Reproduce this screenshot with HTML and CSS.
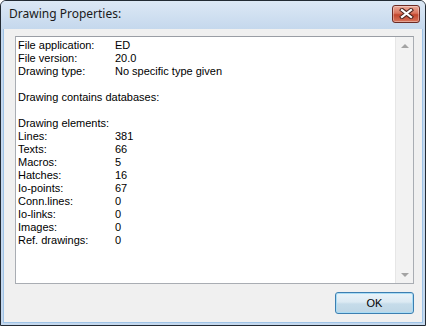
FILE: index.html
```html
<!DOCTYPE html>
<html>
<head>
<meta charset="utf-8">
<link rel="stylesheet" href="styles.css">
</head>
<body>
<div class="window">
  <div class="titlebar">
    <span class="title">Drawing Properties:</span>
    <div class="close" aria-label="Close">
      <svg width="15" height="11" viewBox="0 0 15 11">
        <path d="M3 2 L12 9 M12 2 L3 9" stroke="#4f2620" stroke-width="4.2" stroke-linecap="square"/>
        <path d="M3 2 L12 9 M12 2 L3 9" stroke="#ffffff" stroke-width="2.2" stroke-linecap="square"/>
      </svg>
    </div>
  </div>
  <div class="client">
    <div class="listbox">
      <div class="content">
        <div class="row"><span class="k">File application:</span><span>ED</span></div>
        <div class="row"><span class="k">File version:</span><span>20.0</span></div>
        <div class="row"><span class="k">Drawing type:</span><span>No specific type given</span></div>
        <div class="row blank"></div>
        <div class="row"><span>Drawing contains databases:</span></div>
        <div class="row blank"></div>
        <div class="row"><span>Drawing elements:</span></div>
        <div class="row"><span class="k">Lines:</span><span>381</span></div>
        <div class="row"><span class="k">Texts:</span><span>66</span></div>
        <div class="row"><span class="k">Macros:</span><span>5</span></div>
        <div class="row"><span class="k">Hatches:</span><span>16</span></div>
        <div class="row"><span class="k">Io-points:</span><span>67</span></div>
        <div class="row"><span class="k">Conn.lines:</span><span>0</span></div>
        <div class="row"><span class="k">Io-links:</span><span>0</span></div>
        <div class="row"><span class="k">Images:</span><span>0</span></div>
        <div class="row"><span class="k">Ref. drawings:</span><span>0</span></div>
      </div>
      <div class="scrollbar">
        <div class="arrow up"></div>
        <div class="track"></div>
        <div class="arrow down"></div>
      </div>
    </div>
    <div class="footer">
      <button class="ok">OK</button>
    </div>
  </div>
</div>
</body>
</html>
```
FILE: styles.css
```css
html, body {
  margin: 0;
  padding: 0;
  background: #ffffff;
}
.window {
  width: 424px;
  height: 324px;
  border: 1px solid #222a33;
  border-radius: 6px 6px 0 0;
  background: #c4d8ee;
  display: flex;
  flex-direction: column;
  overflow: hidden;
}
.titlebar {
  height: 28px;
  flex: none;
  background: linear-gradient(#dce8f5, #c5d8ed);
  display: flex;
  align-items: center;
  justify-content: space-between;
  padding: 0 5px 0 8px;
}
.title {
  font-family: "Noto Sans", "Open Sans", sans-serif;
  font-size: 12px;
  color: #1a1a1a;
  margin-top: -4px;
}
.close {
  width: 26px;
  height: 16px;
  border: 1px solid #6b2a24;
  border-radius: 3px;
  background: linear-gradient(#eaa999, #d9735d 45%, #c2452d 55%, #d8755c);
  display: flex;
  align-items: center;
  justify-content: center;
  margin-top: -3px;
  box-shadow: inset 0 0 0 1px rgba(255,255,255,0.35);
}
.client {
  flex: 1;
  margin: 0 2px 2px 2px;
  background: #f0f0f0;
  border-left: 1px solid #9fc3e6;
  border-right: 1px solid #9fc3e6;
  border-bottom: 1px solid #9fc3e6;
  display: flex;
  flex-direction: column;
  padding: 7px 8px 0 11px;
}
.listbox {
  height: 246px;
  border: 1px solid #a9adb3;
  border-top-color: #9a9ea5;
  background: #ffffff;
  display: flex;
}
.content {
  flex: 1;
  padding: 2px 2px;
  font-family: "Liberation Sans", Arial, sans-serif;
  font-size: 11px;
  line-height: 13px;
  color: #000;
}
.row {
  display: flex;
  height: 13px;
  white-space: nowrap;
}
.k {
  width: 97px;
}
.scrollbar {
  width: 17px;
  flex: none;
  background: #f2f2f2;
  border-left: 1px solid #e6e6e6;
  display: flex;
  flex-direction: column;
  align-items: center;
}
.track {
  flex: 1;
}
.arrow {
  height: 17px;
  width: 17px;
  display: flex;
  align-items: center;
  justify-content: center;
}
.arrow::after {
  content: "";
  width: 0;
  height: 0;
  border-left: 4px solid transparent;
  border-right: 4px solid transparent;
}
.up::after {
  border-bottom: 4px solid #a3a3a3;
}
.down::after {
  border-top: 4px solid #a3a3a3;
}
.footer {
  display: flex;
  justify-content: flex-end;
  padding-top: 8px;
}
.ok {
  width: 79px;
  height: 22px;
  border: 1px solid #3c7fb1;
  border-radius: 3px;
  background: linear-gradient(#eaf4fa, #dceaf3 45%, #c6dcea 55%, #bed6e5);
  box-shadow: inset 0 0 0 1px #a9dcf5;
  font-family: "Liberation Sans", Arial, sans-serif;
  font-size: 11px;
  color: #000;
  padding: 0;
}
```
